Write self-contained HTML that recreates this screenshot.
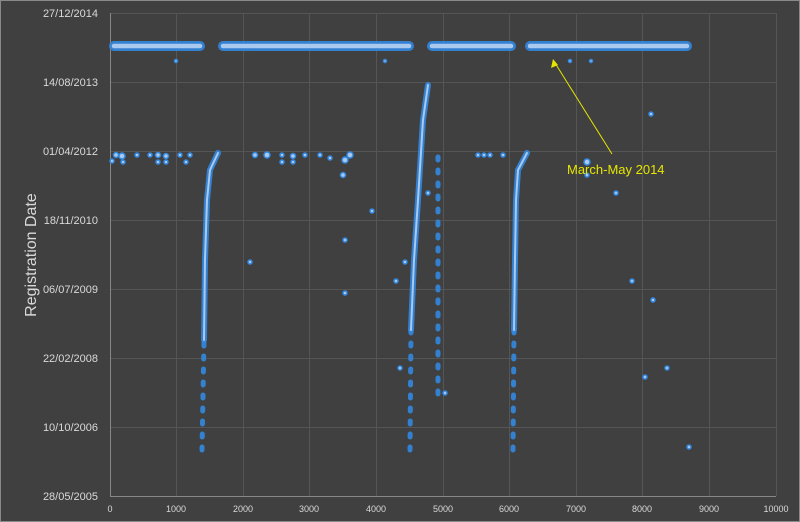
<!DOCTYPE html>
<html><head><style>
html,body{margin:0;padding:0;background:#404040;}
svg{display:block}
text{font-family:"Liberation Sans",sans-serif;fill:#d9d9d9}
</style></head><body>
<svg width="800" height="522" viewBox="0 0 800 522" xmlns="http://www.w3.org/2000/svg">
<rect x="0.5" y="0.5" width="799" height="521" fill="#404040" stroke="#8a8a8a"/>
<g stroke="#555" stroke-width="1">
<line x1="110" y1="13.5" x2="776" y2="13.5"/><line x1="110" y1="82.5" x2="776" y2="82.5"/>
<line x1="110" y1="151.5" x2="776" y2="151.5"/><line x1="110" y1="220.5" x2="776" y2="220.5"/>
<line x1="110" y1="289.5" x2="776" y2="289.5"/><line x1="110" y1="358.5" x2="776" y2="358.5"/>
<line x1="110" y1="427.5" x2="776" y2="427.5"/>
<line x1="176.5" y1="13" x2="176.5" y2="496"/><line x1="243.5" y1="13" x2="243.5" y2="496"/>
<line x1="309.5" y1="13" x2="309.5" y2="496"/><line x1="376.5" y1="13" x2="376.5" y2="496"/>
<line x1="443.5" y1="13" x2="443.5" y2="496"/><line x1="509.5" y1="13" x2="509.5" y2="496"/>
<line x1="576.5" y1="13" x2="576.5" y2="496"/><line x1="642.5" y1="13" x2="642.5" y2="496"/>
<line x1="709.5" y1="13" x2="709.5" y2="496"/><line x1="776.5" y1="13" x2="776.5" y2="496"/>
</g>
<g stroke="#888"><line x1="110.5" y1="13" x2="110.5" y2="496"/><line x1="110" y1="496.5" x2="776" y2="496.5"/></g>
<g font-size="11" text-anchor="end">
<text x="98" y="17">27/12/2014</text><text x="98" y="86">14/08/2013</text><text x="98" y="155">01/04/2012</text>
<text x="98" y="224">18/11/2010</text><text x="98" y="293">06/07/2009</text><text x="98" y="362">22/02/2008</text>
<text x="98" y="431">10/10/2006</text><text x="98" y="500">28/05/2005</text>
</g>
<g font-size="9" text-anchor="middle">
<text x="110" y="512">0</text><text x="176" y="512">1000</text><text x="243" y="512">2000</text><text x="309" y="512">3000</text>
<text x="376" y="512">4000</text><text x="443" y="512">5000</text><text x="509" y="512">6000</text><text x="576" y="512">7000</text>
<text x="642" y="512">8000</text><text x="709" y="512">9000</text><text x="776" y="512">10000</text>
</g>
<text x="0" y="0" font-size="16" text-anchor="middle" transform="translate(36,255) rotate(-90)">Registration Date</text>
<g stroke-linecap="round" fill="none">
<g stroke="#3388e0" stroke-width="10" opacity="0.9">
<line x1="114" y1="46" x2="200" y2="46"/><line x1="223" y1="46" x2="409" y2="46"/>
<line x1="432" y1="46" x2="511" y2="46"/><line x1="530" y1="46" x2="687" y2="46"/>
</g>
<g stroke="#3388e0" stroke-width="6" opacity="0.9">
<polyline points="204,340 205,260 207,200 210,170 218,153"/>
<polyline points="411,330 414,260 418,200 423,120 428,85"/>
<polyline points="514,330 515,260 516,200 518,170 527,153"/>
</g>
<g stroke="#3388e0" stroke-width="5" stroke-dasharray="3 10" opacity="0.9">
<polyline points="202,450 204,340"/>
<polyline points="410,450 411,330"/>
<polyline points="513,450 514,330"/>
<polyline points="438,157 438,400"/>
</g>
<g stroke="#a9c9ef" stroke-width="4.5">
<line x1="114" y1="46" x2="200" y2="46"/><line x1="223" y1="46" x2="409" y2="46"/>
<line x1="432" y1="46" x2="511" y2="46"/><line x1="530" y1="46" x2="687" y2="46"/>
</g>
<g stroke="#a9c9ef" stroke-width="2">
<polyline points="204,340 205,260 207,200 210,170 218,153"/>
<polyline points="411,330 414,260 418,200 423,120 428,85"/>
<polyline points="514,330 515,260 516,200 518,170 527,153"/>
</g>
</g>
<g fill="#a9c9ef" stroke="#3388e0" stroke-width="1.5">
<circle cx="112" cy="161" r="2"/><circle cx="116" cy="155" r="2.5"/><circle cx="122" cy="156" r="3"/><circle cx="123" cy="162" r="2"/>
<circle cx="137" cy="155" r="2"/><circle cx="150" cy="155" r="2"/><circle cx="158" cy="155" r="2.5"/><circle cx="166" cy="156" r="2.5"/>
<circle cx="158" cy="162" r="2"/><circle cx="166" cy="162" r="2"/><circle cx="180" cy="155" r="2"/><circle cx="190" cy="155" r="2"/><circle cx="186" cy="162" r="2"/>
<circle cx="255" cy="155" r="2.5"/><circle cx="267" cy="155" r="3"/><circle cx="282" cy="155" r="2"/><circle cx="293" cy="156" r="2.5"/><circle cx="282" cy="162" r="2"/><circle cx="293" cy="162" r="2"/>
<circle cx="305" cy="155" r="2"/><circle cx="320" cy="155" r="2"/><circle cx="330" cy="158" r="2"/>
<circle cx="345" cy="160" r="3"/><circle cx="350" cy="155" r="3"/><circle cx="343" cy="175" r="2.5"/><circle cx="345" cy="240" r="2"/><circle cx="345" cy="293" r="2"/>
<circle cx="176" cy="61" r="1.5"/><circle cx="385" cy="61" r="1.5"/><circle cx="570" cy="61" r="1.5"/><circle cx="591" cy="61" r="1.5"/>
<circle cx="250" cy="262" r="2"/><circle cx="372" cy="211" r="2"/><circle cx="396" cy="281" r="2"/><circle cx="405" cy="262" r="2"/><circle cx="400" cy="368" r="2"/>
<circle cx="428" cy="193" r="2"/><circle cx="445" cy="393" r="2"/><circle cx="478" cy="155" r="2"/><circle cx="484" cy="155" r="2"/><circle cx="490" cy="155" r="2"/><circle cx="503" cy="155" r="2"/>
<circle cx="587" cy="162" r="3"/><circle cx="587" cy="175" r="2"/><circle cx="616" cy="193" r="2"/><circle cx="651" cy="114" r="2"/><circle cx="632" cy="281" r="2"/>
<circle cx="653" cy="300" r="2"/><circle cx="645" cy="377" r="2"/><circle cx="667" cy="368" r="2"/><circle cx="689" cy="447" r="2"/>
</g>
<line x1="612" y1="154" x2="555" y2="63" stroke="#e6e600" stroke-width="1"/>
<polygon points="553,59 551,68 558,65" fill="#e6e600"/>
<text x="567" y="174" font-size="13" style="fill:#e6e600">March-May 2014</text>
</svg>
</body></html>
